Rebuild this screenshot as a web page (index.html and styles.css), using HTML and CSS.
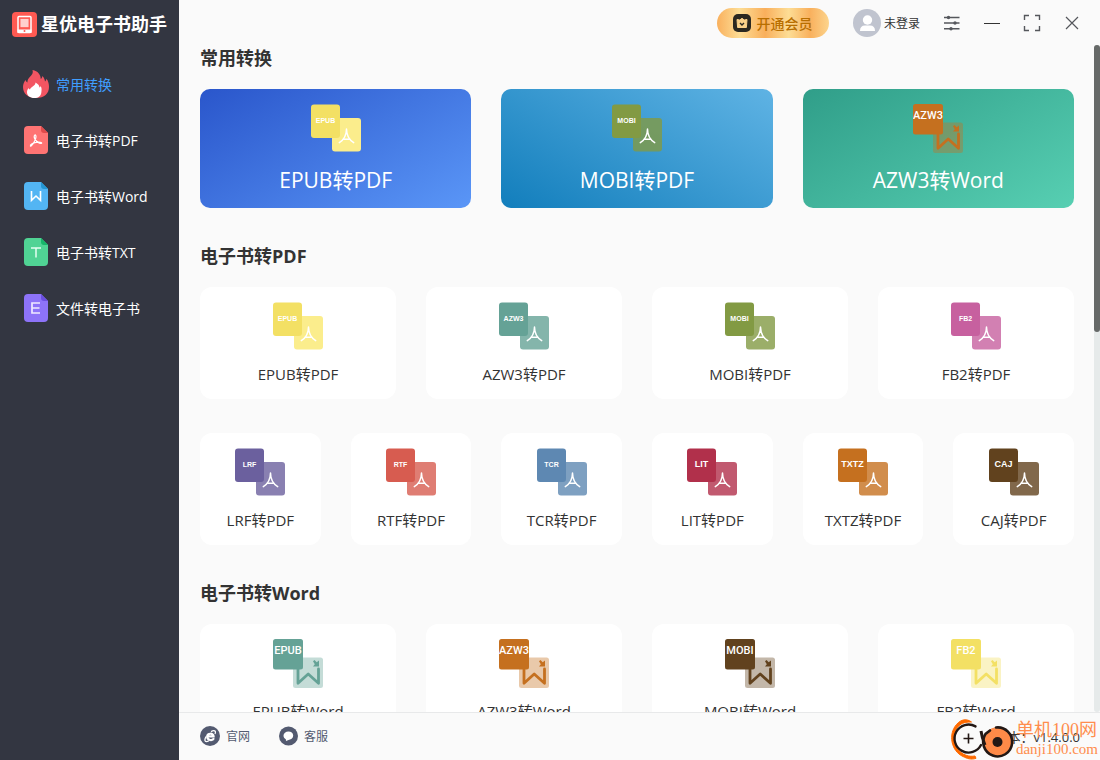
FILE: index.html
```html
<!DOCTYPE html>
<html lang="zh-CN">
<head>
<meta charset="utf-8">
<meta name="viewport" content="width=device-width, initial-scale=1">
<title>星优电子书助手</title>
<link rel="stylesheet" href="styles.css">
</head>
<body>
<svg class="defs" aria-hidden="true">
  <symbol id="to-pdf" viewBox="0 0 50 50">
    <rect class="back" x="21" y="14" width="29" height="33.5" rx="3"/>
    <rect x="0" y=".5" width="29" height="33.5" rx="3" fill="currentColor"/>
    <path d="M35.500 25C35.500 30.500 32.500 36 28.300 38.600M35.500 25C35.500 30.500 38.500 36 42.700 38.600M32 35.300H39" fill="none" stroke="#fff" stroke-width="1.500" stroke-linecap="round"/>
  </symbol>
  <symbol id="to-word" viewBox="0 0 50 50">
    <rect x="20" y="18.5" width="30" height="30.5" rx="2.5" fill="currentColor" opacity=".38"/>
    <path d="M25 30V44.300L35.200 35L45.500 44.300V30" fill="none" stroke="currentColor" stroke-width="2.800" stroke-linecap="round" stroke-linejoin="round"/>
    <path d="M40 22.300L41.500 21L43.700 23.200L46 21.500V27.500H40L41.800 25.200Z" fill="currentColor"/>
    <rect x="0" y="0" width="30" height="30.5" rx="2.5" fill="currentColor"/>
  </symbol>
</svg>

<div class="app">
  <aside class="sidebar">
    <div class="brand">
      <svg class="brand-icon" viewBox="0 0 25 25" aria-hidden="true">
        <rect width="25" height="25" rx="4" fill="#ff5a52"/>
        <rect x="6" y="4.5" width="13" height="16" rx="1" fill="none" stroke="#fff" stroke-width="1.5"/>
        <path d="M5.5 17.5H19.5V21H5.5Z" fill="#fff"/>
        <path d="M8.500 6.900H16.500V15.200H8.500Z" fill="#ffb3ad"/>
        <path d="M8.500 8H16.500M8.500 10H16.500M8.500 12H16.500M8.500 14H16.500" stroke="#fff" stroke-width=".8"/>
        <circle cx="12.5" cy="19" r="1" fill="#ff5a52"/>
      </svg>
      <span class="brand-name">星优电子书助手</span>
    </div>
    <nav class="nav">
      <a class="nav-item active" href="#common">
        <svg class="nav-icon" viewBox="0 0 24 28" aria-hidden="true">
          <path d="M8.500 0C14 1 16.500 4.500 16.800 9C17.700 8.300 18.200 7.500 18.300 6C20.200 7.800 20.700 9.500 21 11.500C21.800 11 22.300 10 22.500 8.800C24.200 11 25 13.700 25 16.800C25 23.800 20.500 28 12 28C4 28-1 23.600-1 17C-1 13.800.3 11.700 1.400 9.900C2 11.200 2.500 11.800 3.400 12.400C3.500 10 4 8.800 6 6.800C8 4.800 9.500 2.800 8.500 0Z" fill="#f25562"/>
          <path d="M11.500 12.500C14.200 14 15.300 15.500 15.500 17.500C16.100 17.200 16.500 16.800 16.700 16C18 18.500 17.600 19.500 17.400 22C17 26 14.500 28 10.300 28C6 28 3.200 25.700 3 22.500C2.900 20.800 3.600 19.300 4.600 18C5 19 5.300 19.300 6 19.600C6.700 16.500 11.500 16.200 11.500 12.500Z" fill="#fff"/>
        </svg>常用转换</a>
      <a class="nav-item" href="#pdf">
        <svg class="nav-icon" viewBox="0 0 24 28" aria-hidden="true">
          <path d="M4 0H17L24 7V24Q24 28 20 28H4Q0 28 0 24V4Q0 0 4 0Z" fill="#ff7473"/>
          <path d="M17 0L24 7H20Q17 7 17 4Z" fill="#e04b4b"/>
          <path d="M10.8 9C12.6 8.6 12.2 12.5 10.5 15.2C9 18.2 7 20.7 6.4 20C5.8 18.9 9.5 16.6 12 16.3C15.3 15.7 18.3 16.4 17.5 17.3C16.3 18.2 9.8 14.5 10.2 10.4Q10.3 9.2 10.8 9Z" fill="none" stroke="#fff" stroke-width="1.2"/>
        </svg>电子书转PDF</a>
      <a class="nav-item" href="#word">
        <svg class="nav-icon" viewBox="0 0 24 28" aria-hidden="true">
          <path d="M4 0H17L24 7V24Q24 28 20 28H4Q0 28 0 24V4Q0 0 4 0Z" fill="#53b5f3"/>
          <path d="M17 0L24 7H20Q17 7 17 4Z" fill="#2497d4"/>
          <path d="M7.500 9V18.300L12 14L16.500 18.300V9" fill="none" stroke="#fff" stroke-width="1.600"/>
        </svg>电子书转Word</a>
      <a class="nav-item" href="#txt">
        <svg class="nav-icon" viewBox="0 0 24 28" aria-hidden="true">
          <path d="M4 0H17L24 7V24Q24 28 20 28H4Q0 28 0 24V4Q0 0 4 0Z" fill="#50d394"/>
          <path d="M17 0L24 7H20Q17 7 17 4Z" fill="#17b569"/>
          <path d="M7 10H17M12 10V19.5" fill="none" stroke="#e4fff1" stroke-width="1.5"/>
        </svg>电子书转TXT</a>
      <a class="nav-item" href="#ebook">
        <svg class="nav-icon" viewBox="0 0 24 28" aria-hidden="true">
          <path d="M4 0H17L24 7V24Q24 28 20 28H4Q0 28 0 24V4Q0 0 4 0Z" fill="#8d73f8"/>
          <path d="M17 0L24 7H20Q17 7 17 4Z" fill="#6b4fe0"/>
          <path d="M16 9H8V19H16M8 14H15.5" fill="none" stroke="#efeaff" stroke-width="1.7"/>
        </svg>文件转电子书</a>
    </nav>
  </aside>

  <div class="main">
    <header class="topbar">
      <button class="vip" type="button">
        <svg class="vip-icon" viewBox="0 0 18 18" aria-hidden="true">
          <rect width="18" height="18" rx="5" fill="#2b2820"/>
          <path d="M4 5.500L6.800 6L9 4.300L11.200 6L14 5.500L13.400 13.500H4.600Z" fill="#fbd28a" stroke="#fbd28a" stroke-linejoin="round"/>
          <path d="M7 9L9 11L11 9" fill="none" stroke="#2b2820" stroke-width="1.4"/>
        </svg>开通会员</button>
      <button class="account" type="button">
        <svg class="avatar" viewBox="0 0 28 28" aria-hidden="true">
          <circle cx="14" cy="14" r="14" fill="#c0c4cf"/>
          <circle cx="14.5" cy="11" r="4.7" fill="#fff"/>
          <path d="M7 22Q7 16.5 12 16.5H17Q22 16.5 22 22Z" fill="#fff"/>
        </svg>未登录</button>
      <div class="window-tools">
        <button class="tool" type="button" aria-label="设置">
          <svg viewBox="0 0 18 18" aria-hidden="true"><path d="M1 3.500H16.500M1 9H16.500M1 14.800H16.500" stroke="#55575c" stroke-width="1.400"/><g fill="#55575c"><circle cx="5.500" cy="3.500" r="1.700"/><circle cx="12" cy="9" r="1.700"/><circle cx="8" cy="14.800" r="1.700"/></g></svg>
        </button>
        <button class="tool" type="button" aria-label="最小化">
          <svg viewBox="0 0 18 18" aria-hidden="true"><path d="M1 9.5H17" stroke="#333" stroke-width="1"/></svg>
        </button>
        <button class="tool" type="button" aria-label="最大化">
          <svg viewBox="0 0 18 18" aria-hidden="true"><path d="M1.5 6V1.5H6M12 1.5H16.5V6M16.5 12V16.5H12M6 16.5H1.5V12" fill="none" stroke="#55575c" stroke-width="1.4"/></svg>
        </button>
        <button class="tool" type="button" aria-label="关闭">
          <svg viewBox="0 0 18 18" aria-hidden="true"><path d="M3 3L15 15M15 3L3 15" stroke="#55575c" stroke-width="1.2"/></svg>
        </button>
      </div>
    </header>

    <div class="viewport">
      <main class="content">
        <section id="common">
          <h2 class="title">常用转换</h2>
          <div class="row three">
            <button class="card hero blue" type="button"><svg class="icon c-yellow" viewBox="0 0 50 50"><use href="#to-pdf"/><text class="tag" x="14.5" y="19">EPUB</text></svg><span class="label">EPUB转PDF</span></button>
            <button class="card hero sky" type="button"><svg class="icon c-olive" viewBox="0 0 50 50"><use href="#to-pdf"/><text class="tag" x="14.5" y="19">MOBI</text></svg><span class="label">MOBI转PDF</span></button>
            <button class="card hero green" type="button"><svg class="icon c-orange" viewBox="0 0 50 50"><use href="#to-word"/><text class="tag tall" x="15" y="15">AZW3</text></svg><span class="label">AZW3转Word</span></button>
          </div>
        </section>

        <section id="pdf">
          <h2 class="title">电子书转PDF</h2>
          <div class="row four">
            <button class="card" type="button"><svg class="icon c-yellow" viewBox="0 0 50 50"><use href="#to-pdf"/><text class="tag" x="14.5" y="19">EPUB</text></svg><span class="label">EPUB转PDF</span></button>
            <button class="card" type="button"><svg class="icon c-teal" viewBox="0 0 50 50"><use href="#to-pdf"/><text class="tag" x="14.5" y="19">AZW3</text></svg><span class="label">AZW3转PDF</span></button>
            <button class="card" type="button"><svg class="icon c-olive" viewBox="0 0 50 50"><use href="#to-pdf"/><text class="tag" x="14.5" y="19">MOBI</text></svg><span class="label">MOBI转PDF</span></button>
            <button class="card" type="button"><svg class="icon c-pink" viewBox="0 0 50 50"><use href="#to-pdf"/><text class="tag" x="14.5" y="19">FB2</text></svg><span class="label">FB2转PDF</span></button>
          </div>
          <div class="row six">
            <button class="card" type="button"><svg class="icon c-purple" viewBox="0 0 50 50"><use href="#to-pdf"/><text class="tag" x="14.5" y="19">LRF</text></svg><span class="label">LRF转PDF</span></button>
            <button class="card" type="button"><svg class="icon c-coral" viewBox="0 0 50 50"><use href="#to-pdf"/><text class="tag" x="14.5" y="19">RTF</text></svg><span class="label">RTF转PDF</span></button>
            <button class="card" type="button"><svg class="icon c-steel" viewBox="0 0 50 50"><use href="#to-pdf"/><text class="tag" x="14.5" y="19">TCR</text></svg><span class="label">TCR转PDF</span></button>
            <button class="card" type="button"><svg class="icon c-crimson" viewBox="0 0 50 50"><use href="#to-pdf"/><text class="tag wide" x="14.5" y="19">LIT</text></svg><span class="label">LIT转PDF</span></button>
            <button class="card" type="button"><svg class="icon c-orange" viewBox="0 0 50 50"><use href="#to-pdf"/><text class="tag wide" x="14.5" y="19">TXTZ</text></svg><span class="label">TXTZ转PDF</span></button>
            <button class="card" type="button"><svg class="icon c-brown" viewBox="0 0 50 50"><use href="#to-pdf"/><text class="tag wide" x="14.5" y="19">CAJ</text></svg><span class="label">CAJ转PDF</span></button>
          </div>
        </section>

        <section id="word">
          <h2 class="title">电子书转Word</h2>
          <div class="row four">
            <button class="card" type="button"><svg class="icon c-teal" viewBox="0 0 50 50"><use href="#to-word"/><text class="tag tall" x="15" y="15">EPUB</text></svg><span class="label">EPUB转Word</span></button>
            <button class="card" type="button"><svg class="icon c-orange" viewBox="0 0 50 50"><use href="#to-word"/><text class="tag tall" x="15" y="15">AZW3</text></svg><span class="label">AZW3转Word</span></button>
            <button class="card" type="button"><svg class="icon c-brown" viewBox="0 0 50 50"><use href="#to-word"/><text class="tag tall" x="15" y="15">MOBI</text></svg><span class="label">MOBI转Word</span></button>
            <button class="card" type="button"><svg class="icon c-yellow" viewBox="0 0 50 50"><use href="#to-word"/><text class="tag tall" x="15" y="15">FB2</text></svg><span class="label">FB2转Word</span></button>
          </div>
        </section>
      </main>
      <div class="track" aria-hidden="true"><div class="thumb"></div></div>
    </div>

    <footer class="footer">
      <a class="foot-link" href="#site">
        <svg class="foot-icon" viewBox="0 0 20 20" aria-hidden="true">
          <circle cx="10" cy="10" r="10" fill="#535a70"/>
          <path d="M14 12.300C12.500 15 7.200 14.600 7.200 10.600C7.200 6.800 13.600 6.800 13.600 10.400H8" fill="none" stroke="#fff" stroke-width="2.200"/>
          <path d="M15 8C16.500 4.500 14 4 11 5.600M6 10.500C3.500 15.500 5.500 16.500 9 14.700" fill="none" stroke="#fff" stroke-width="1.200"/>
        </svg>官网</a>
      <a class="foot-link" href="#support">
        <svg class="foot-icon" viewBox="0 0 20 20" aria-hidden="true">
          <circle cx="10.500" cy="10" r="9.500" fill="#535a70"/>
          <path d="M10.500 5.500C13 5.500 15.200 7 15.200 9.600C15.200 12.100 13.200 13.600 11.200 13.800L8 15L7.800 13.300C6.300 12.500 5.500 11.200 5.500 9.600C5.500 7.200 7.700 5.500 10.500 5.500Z" fill="#fff"/>
        </svg>客服</a>
      <span class="version">版本：v1.4.0.0</span>
    </footer>
  </div>

  <div class="watermark">
    <svg class="wm-logo" viewBox="0 0 66 42" aria-hidden="true">
      <path d="M21.500 4C17 .5 11 1 6.500 6.500C-2 16 1 33 13 38.500C17 40.500 21 42 26 40.300L25 38C19 39 14 37 10.500 34C2 26 2 14 10 6.800C13 4.500 17 3.800 21.500 4Z" fill="#ff6a00" stroke="#ff6a00"/>
      <circle cx="18.500" cy="20.500" r="14" fill="#fafafa"/>
      <path d="M25.500 8.400A14 14 0 1 0 31 27" fill="none" stroke="#231815" stroke-width="2.400" stroke-linecap="round"/>
      <path d="M13.500 20.500H23.500M18.500 15.500V25.500" stroke="#231815" stroke-width="1.600"/>
      <circle cx="47.500" cy="23.800" r="14.500" fill="#ff8a48"/>
      <path d="M46 9.500A14.500 14.500 0 1 1 35.500 16L40 12.500" fill="none" stroke="#231815" stroke-width="2.600" stroke-linecap="round"/>
      <path d="M31 13Q32 20 35 27" fill="none" stroke="#231815" stroke-width="3"/>
      <circle cx="47.500" cy="24" r="5" fill="#231815"/>
    </svg>
    <div class="wm-text">
      <span class="wm-name">单机100网</span>
      <span class="wm-url">danji100.com</span>
    </div>
  </div>
</div>
</body>
</html>
```
FILE: styles.css
```css
* { box-sizing: border-box; }

body {
  margin: 0;
  background: #fafafa;
  color: #333;
  font-family: "Open Sans", "Noto Sans CJK SC", sans-serif;
  font-size: 14px;
}

button {
  padding: 0;
  border: 0;
  background: none;
  color: inherit;
  font: inherit;
  cursor: pointer;
}

a { color: inherit; text-decoration: none; }

svg { display: block; flex: none; }

.defs { position: absolute; width: 0; height: 0; }

.app {
  position: relative;
  display: flex;
  height: 100vh;
  overflow: hidden;
}

/* Sidebar */
.sidebar {
  flex: none;
  width: 179px;
  background: #333641;
  color: #fff;
}

.brand {
  display: flex;
  align-items: center;
  gap: 4px;
  height: 48px;
  padding-left: 12px;
}

.brand-icon { width: 25px; height: 25px; }

.brand-name {
  font-size: 18px;
  line-height: 24px;
  font-weight: 700;
  white-space: nowrap;
}

.nav { padding-top: 8px; }

.nav-item {
  display: flex;
  align-items: center;
  gap: 8px;
  height: 56px;
  padding-left: 24px;
  white-space: nowrap;
}

.nav-item.active { color: #409eff; }

.nav-icon { width: 24px; height: 28px; overflow: visible; }

/* Main column */
.main {
  flex: 1;
  min-width: 0;
  display: flex;
  flex-direction: column;
}

.topbar {
  flex: none;
  display: flex;
  align-items: center;
  justify-content: flex-end;
  height: 45px;
  padding: 0 8px 0 20px;
}

.vip {
  display: flex;
  align-items: center;
  justify-content: center;
  gap: 5px;
  width: 112px;
  height: 30px;
  margin-right: 24px;
  border-radius: 15px;
  background: linear-gradient(90deg, #f9b05d 0%, #fddd95 20%, #f9af5c 43%, #fddd95 64%, #f9b05d 83%, #fcd48c 100%);
  color: #b86e00;
  font-weight: 500;
}

.vip-icon { width: 18px; height: 18px; }

.account {
  display: flex;
  align-items: center;
  gap: 3px;
  font-size: 12px;
}

.avatar { width: 28px; height: 28px; }

.window-tools { display: flex; margin-left: 12px; }

.tool {
  display: grid;
  place-items: center;
  width: 40px;
  height: 40px;
}

.tool svg { width: 18px; height: 18px; }

.viewport {
  flex: 1;
  min-height: 0;
  display: flex;
}

.content {
  flex: 1;
  min-width: 0;
  padding: 0 20px 34px 21px;
  overflow-y: auto;
  scrollbar-width: none;
}

.track {
  flex: none;
  width: 6px;
  border-radius: 3px;
  background: #e6eaea;
}

.thumb {
  height: 43%;
  border-radius: 3px;
  background: #666968;
}

.title {
  margin: 0 0 18px;
  font-size: 18px;
  line-height: 26px;
  font-weight: 700;
}

section + section { margin-top: 35px; }

.row { display: grid; gap: 30px; }
.row + .row { margin-top: 34px; }
.three { grid-template-columns: repeat(3, 1fr); }
.four { grid-template-columns: repeat(4, 1fr); }
.six { grid-template-columns: repeat(6, 1fr); }

.card {
  display: flex;
  flex-direction: column;
  align-items: center;
  gap: 10px;
  padding: 15px 0 13px;
  border-radius: 12px;
  background: #fff;
}

.icon { width: 50px; height: 50px; }

.label {
  font-size: 15px;
  line-height: 24px;
  white-space: nowrap;
}

.hero { padding-bottom: 11px; border-radius: 10px; color: #fff; }
.hero .label { font-size: 21px; line-height: 33px; }

.blue { background: linear-gradient(150deg, #2a56cb, #5a96f7); }
.sky { background: linear-gradient(30deg, #127ebc, #5fb3e4); }
.green { background: linear-gradient(150deg, #309e89, #57cfb2); }

.back { fill: var(--back, currentColor); opacity: var(--back-opacity, .8); }

.tag {
  fill: #fff;
  font-family: "Liberation Sans", sans-serif;
  font-size: 7px;
  font-weight: 700;
  text-anchor: middle;
}

.tag.wide { font-size: 9px; }
.tag.tall { font-family: Roboto, sans-serif; font-size: 11px; font-weight: 500; }

.c-yellow { color: #f3e064; --back: #fbed8c; --back-opacity: 1; }
.c-olive { color: #829a43; }
.c-orange { color: #c5701f; }
.c-teal { color: #65a296; }
.c-pink { color: #c7609f; }
.c-purple { color: #6b609e; }
.c-coral { color: #d75c50; }
.c-steel { color: #5e88b2; }
.c-crimson { color: #b1304b; }
.c-brown { color: #61421e; }

/* Footer */
.footer {
  flex: none;
  display: flex;
  align-items: center;
  gap: 28px;
  height: 48px;
  padding: 0 20px 1px 21px;
  border-top: 1px solid #e8e9ea;
  font-size: 12px;
}

.foot-link {
  display: flex;
  align-items: center;
  gap: 6px;
  color: #535a70;
}

.foot-icon { width: 20px; height: 20px; }

.version { margin-left: auto; font-size: 13px; }

.watermark {
  position: absolute;
  right: 2px;
  bottom: 0;
  display: flex;
  align-items: center;
}

.wm-logo { width: 66px; height: 42px; }

.wm-text {
  display: flex;
  flex-direction: column;
  color: #ff8d4d;
  font-family: "Liberation Serif", "Noto Sans CJK SC", serif;
  white-space: nowrap;
}

.wm-name { font-size: 18px; line-height: 20px; }
.wm-url { font-size: 15px; line-height: 18px; }
```
